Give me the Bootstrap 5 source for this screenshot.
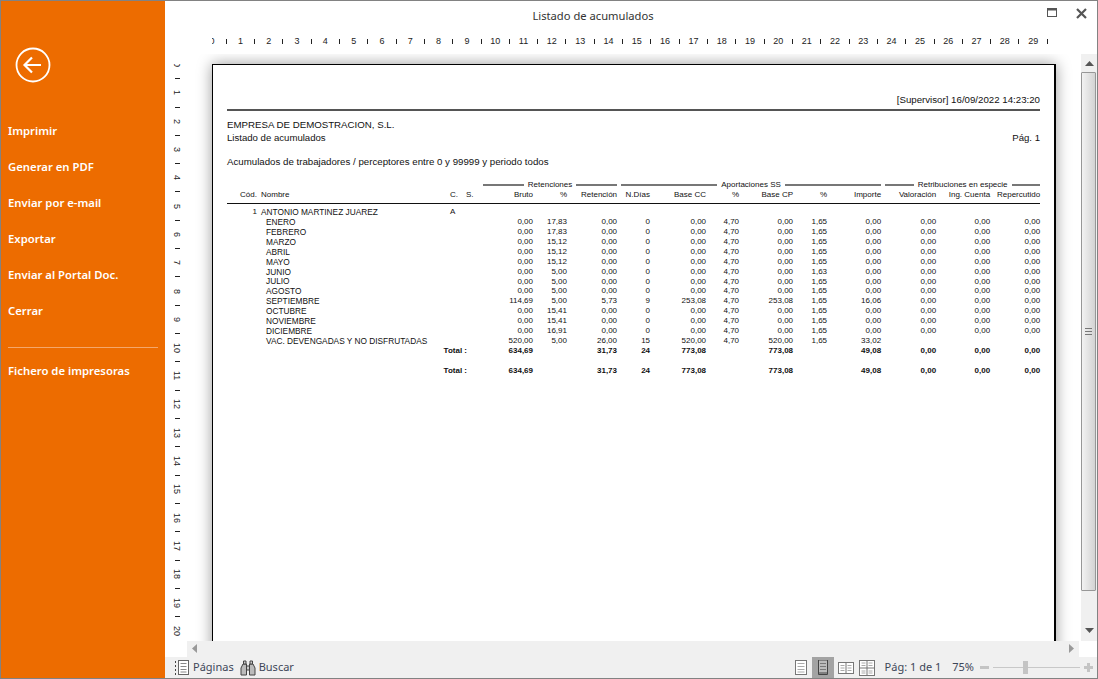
<!DOCTYPE html>
<html lang="es">
<head>
<meta charset="UTF-8" />
<title>Listado de acumulados</title>
<link href="https://cdn.jsdelivr.net/npm/bootstrap@5.3.0/dist/css/bootstrap.min.css" rel="stylesheet" />
<style>
  html, body { height: 100%; margin: 0; background: #fff; overflow: hidden; }
  .app-win { width: 1098px; height: 679px; border: 1px solid #828282; font-family: "Noto Sans", sans-serif; }
  .side-menu { width: 164px; flex: none; background: #ed6c00; color: #fff; padding: 0 7px; }
  .back-btn { height: 34px; margin: 47px 0 40px 7px; }
  .side-item { height: 36px; line-height: 18px; font-size: 11.3px; font-weight: 600; color: #fff; text-decoration: none; display: block; }
  .side-sep { border-top: 1px solid #f5a76a; margin: 9px 0 14px; }
  .main-col { min-width: 0; }
  .win-title { height: 31px; flex: none; font-size: 11.2px; color: #333; position: relative; padding-right: 76px; }
  .win-btns { position: absolute; right: 10px; top: 7px; gap: 19px; }
  .ruler-top { height: 22px; flex: none; margin-left: 47px; font: 9px "Liberation Sans", sans-serif; color: #222; overflow: hidden; }
  .ruler-top span { flex: 0 0 14.16px; text-align: center; line-height: 18px; }
  .ruler-top span:first-child { margin-left: -7px; }
  .ruler-top .tick::after { content: ""; display: inline-block; width: 1px; height: 5px; background: #222; vertical-align: middle; }
  .doc-row { flex: 1 1 0; min-height: 0; }
  .ruler-left { width: 20px; flex: none; font: 9px "Liberation Sans", sans-serif; color: #222; margin-top: 10px; padding-left: 4px; overflow: hidden; }
  .ruler-left span { height: 14.16px; flex: none; display: flex; align-items: center; justify-content: center; writing-mode: vertical-rl; }
  .ruler-left span:first-child { margin-top: -6.5px; }
  .ruler-left .tick { writing-mode: horizontal-tb; }
  .ruler-left .tick::after { content: ""; width: 5px; height: 1px; background: #222; }
  .view-area { padding: 10px 0 0 27px; overflow: hidden; min-width: 0; }
  .sheet { width: 844px; height: 800px; flex: none; border: 1px solid #000; border-right-width: 2px; padding: 29px 14px 0 14px; background: #fff;
    box-shadow: 0 0 14px rgba(0,0,0,.4); font: 8px/10px "Liberation Sans", sans-serif; color: #111; }
  .sheet-stamp { font-size: 9.7px; text-align: right; height: 15px; line-height: 12px; }
  .sheet-rule { height: 2px; background: #555; margin: 0 0 7px; }
  .sheet-h { font-size: 9.7px; line-height: 13px; }
  .sheet-h2 { font-size: 9.6px; line-height: 13px; }
  .sheet-sub { font-size: 9.7px; line-height: 13px; margin: 11px 0 12px; }
  .rep-tbl { table-layout: fixed; width: 813px; }
  .rep-tbl td, .rep-tbl th { padding: 0; height: 10px; line-height: 10px; white-space: nowrap; text-align: right; font-weight: 400; }
  .rep-tbl .l { text-align: left; }
  .rep-tbl .nm { text-align: left; padding-left: 4px; }
  .rep-tbl td.nm, .rep-tbl .mo { font-size: 8.3px; }
  .rep-tbl .mo { text-align: left; padding-left: 9px; }
  .rep-tbl thead tr:last-child th { height: 13px; border-bottom: 1px solid #111; vertical-align: top; }
  .rep-tbl .gap td { height: 4px; line-height: 4px; }
  .rep-tbl .tot td { font-weight: 700; }
  .rep-tbl .short-row td { height: 9px; line-height: 9px; }
  .grp-line { gap: 2px; align-items: center; padding-left: 4px; }
  .grp-line i { flex: 1 1 0; height: 2px; background: #777; }
  .grp-line b { font-weight: 400; padding: 0 2px; }
  .vbar { width: 16px; flex: none; background: #f0f0f0; }
  .vbar-btn { height: 18px; flex: none; }
  .vbar-thumb { height: 519px; flex: none; width: 15px; border: 1px solid #979797; border-radius: 1px; background: linear-gradient(90deg, #f2f2f2, #d3d3d3); }
  .vbar-btn.dn { margin-bottom: 2px; }
  .hbar { height: 16px; flex: none; margin: 0 18px 0 22px; background: #f0f0f0; padding: 0 5px 2px; }
  .st-bar { height: 21px; flex: none; background: #f0f0f0; font-size: 11px; color: #3d4658; padding-left: 10px; }
  .st-on { background: #a3a3a3; }
  .st-view { width: 22px; height: 21px; }
  .st-view.nrw { width: 20px; }
  .zoom-track { width: 87px; height: 1px; background: #c8c8c8; }
  .zoom-thumb { width: 5px; height: 13px; background: #c4c4c4; position: absolute; left: 30px; top: -6px; }
</style>
</head>
<body>
<div class="app-win d-flex">
  <aside class="side-menu">
    <div class="back-btn">
      <svg width="36" height="36" viewBox="0 0 36 36" style="margin-top:-1px"><circle cx="18" cy="18" r="16.5" fill="none" stroke="#fff" stroke-width="1.8"/><path d="M9.5 18H26M17 10.5L9.5 18l7.5 7.5" fill="none" stroke="#fff" stroke-width="2.2"/></svg>
    </div>
    <a class="side-item" href="#">Imprimir</a>
    <a class="side-item" href="#">Generar en PDF</a>
    <a class="side-item" href="#">Enviar por e-mail</a>
    <a class="side-item" href="#">Exportar</a>
    <a class="side-item" href="#">Enviar al Portal Doc.</a>
    <a class="side-item" href="#">Cerrar</a>
    <div class="side-sep"></div>
    <a class="side-item" href="#">Fichero de impresoras</a>
  </aside>

  <main class="main-col flex-grow-1 d-flex flex-column">
    <div class="win-title d-flex align-items-center justify-content-center">
      Listado de acumulados
      <div class="win-btns d-flex">
        <svg width="10" height="10" viewBox="0 0 10 10"><rect x=".5" y=".5" width="9" height="8" fill="none" stroke="#555"/><rect x="0" y="0" width="10" height="2.5" fill="#555"/></svg>
        <svg width="11" height="11" viewBox="0 0 11 11"><path d="M1 1l9 9M10 1l-9 9" stroke="#555" stroke-width="2.2"/></svg>
      </div>
    </div>

    <div class="ruler-top d-flex">
      <span>0</span><span class="tick"></span><span>1</span><span class="tick"></span><span>2</span><span class="tick"></span><span>3</span><span class="tick"></span><span>4</span><span class="tick"></span><span>5</span><span class="tick"></span><span>6</span><span class="tick"></span><span>7</span><span class="tick"></span><span>8</span><span class="tick"></span><span>9</span><span class="tick"></span><span>10</span><span class="tick"></span><span>11</span><span class="tick"></span><span>12</span><span class="tick"></span><span>13</span><span class="tick"></span><span>14</span><span class="tick"></span><span>15</span><span class="tick"></span><span>16</span><span class="tick"></span><span>17</span><span class="tick"></span><span>18</span><span class="tick"></span><span>19</span><span class="tick"></span><span>20</span><span class="tick"></span><span>21</span><span class="tick"></span><span>22</span><span class="tick"></span><span>23</span><span class="tick"></span><span>24</span><span class="tick"></span><span>25</span><span class="tick"></span><span>26</span><span class="tick"></span><span>27</span><span class="tick"></span><span>28</span><span class="tick"></span><span>29</span><span class="tick"></span>
    </div>

    <div class="doc-row d-flex">
      <div class="ruler-left d-flex flex-column">
        <span>0</span><span class="tick"></span><span>1</span><span class="tick"></span><span>2</span><span class="tick"></span><span>3</span><span class="tick"></span><span>4</span><span class="tick"></span><span>5</span><span class="tick"></span><span>6</span><span class="tick"></span><span>7</span><span class="tick"></span><span>8</span><span class="tick"></span><span>9</span><span class="tick"></span><span>10</span><span class="tick"></span><span>11</span><span class="tick"></span><span>12</span><span class="tick"></span><span>13</span><span class="tick"></span><span>14</span><span class="tick"></span><span>15</span><span class="tick"></span><span>16</span><span class="tick"></span><span>17</span><span class="tick"></span><span>18</span><span class="tick"></span><span>19</span><span class="tick"></span><span>20</span>
      </div>
      <div class="view-area flex-grow-1 d-flex">
        <div class="sheet">
          <div class="sheet-stamp">[Supervisor] 16/09/2022 14:23:20</div>
          <div class="sheet-rule"></div>
          <div class="sheet-h">EMPRESA DE DEMOSTRACION, S.L.</div>
          <div class="sheet-h2 d-flex justify-content-between"><span>Listado de acumulados</span><span>Pág. 1</span></div>
          <div class="sheet-sub">Acumulados de trabajadores / perceptores entre 0 y 99999 y periodo todos</div>
          <table class="rep-tbl">
            <colgroup>
              <col style="width:30px"><col style="width:193px"><col style="width:16px"><col style="width:17px"><col style="width:50px"><col style="width:34px"><col style="width:50px"><col style="width:33px"><col style="width:56px"><col style="width:33px"><col style="width:54px"><col style="width:34px"><col style="width:54px"><col style="width:55px"><col style="width:54px"><col style="width:50px">
            </colgroup>
            <thead>
              <tr>
                <th colspan="4"></th>
                <th colspan="3"><div class="grp-line d-flex" style="padding-left:0"><i></i><b>Retenciones</b><i></i></div></th>
                <th colspan="6"><div class="grp-line d-flex"><i></i><b>Aportaciones SS</b><i></i></div></th>
                <th colspan="3"><div class="grp-line d-flex"><i></i><b>Retribuciones en especie</b><i></i></div></th>
              </tr>
              <tr>
                <th>Cód.</th><th class="nm">Nombre</th><th class="l">C.</th><th class="l">S.</th><th>Bruto</th><th>%</th><th>Retención</th><th>N.Días</th><th>Base CC</th><th>%</th><th>Base CP</th><th>%</th><th>Importe</th><th>Valoración</th><th>Ing. Cuenta</th><th>Repercutido</th>
              </tr>
            </thead>
            <tbody>
              <tr class="gap"><td colspan="16"></td></tr>
              <tr><td>1</td><td class="nm">ANTONIO MARTINEZ JUAREZ</td><td class="l">A</td><td colspan="13"></td></tr>
              <tr><td></td><td class="mo" colspan="3">ENERO</td><td>0,00</td><td>17,83</td><td>0,00</td><td>0</td><td>0,00</td><td>4,70</td><td>0,00</td><td>1,65</td><td>0,00</td><td>0,00</td><td>0,00</td><td>0,00</td></tr>
              <tr><td></td><td class="mo" colspan="3">FEBRERO</td><td>0,00</td><td>17,83</td><td>0,00</td><td>0</td><td>0,00</td><td>4,70</td><td>0,00</td><td>1,65</td><td>0,00</td><td>0,00</td><td>0,00</td><td>0,00</td></tr>
              <tr><td></td><td class="mo" colspan="3">MARZO</td><td>0,00</td><td>15,12</td><td>0,00</td><td>0</td><td>0,00</td><td>4,70</td><td>0,00</td><td>1,65</td><td>0,00</td><td>0,00</td><td>0,00</td><td>0,00</td></tr>
              <tr><td></td><td class="mo" colspan="3">ABRIL</td><td>0,00</td><td>15,12</td><td>0,00</td><td>0</td><td>0,00</td><td>4,70</td><td>0,00</td><td>1,65</td><td>0,00</td><td>0,00</td><td>0,00</td><td>0,00</td></tr>
              <tr><td></td><td class="mo" colspan="3">MAYO</td><td>0,00</td><td>15,12</td><td>0,00</td><td>0</td><td>0,00</td><td>4,70</td><td>0,00</td><td>1,65</td><td>0,00</td><td>0,00</td><td>0,00</td><td>0,00</td></tr>
              <tr><td></td><td class="mo" colspan="3">JUNIO</td><td>0,00</td><td>5,00</td><td>0,00</td><td>0</td><td>0,00</td><td>4,70</td><td>0,00</td><td>1,63</td><td>0,00</td><td>0,00</td><td>0,00</td><td>0,00</td></tr>
              <tr class="short-row"><td></td><td class="mo" colspan="3">JULIO</td><td>0,00</td><td>5,00</td><td>0,00</td><td>0</td><td>0,00</td><td>4,70</td><td>0,00</td><td>1,65</td><td>0,00</td><td>0,00</td><td>0,00</td><td>0,00</td></tr>
              <tr><td></td><td class="mo" colspan="3">AGOSTO</td><td>0,00</td><td>5,00</td><td>0,00</td><td>0</td><td>0,00</td><td>4,70</td><td>0,00</td><td>1,65</td><td>0,00</td><td>0,00</td><td>0,00</td><td>0,00</td></tr>
              <tr><td></td><td class="mo" colspan="3">SEPTIEMBRE</td><td>114,69</td><td>5,00</td><td>5,73</td><td>9</td><td>253,08</td><td>4,70</td><td>253,08</td><td>1,65</td><td>16,06</td><td>0,00</td><td>0,00</td><td>0,00</td></tr>
              <tr><td></td><td class="mo" colspan="3">OCTUBRE</td><td>0,00</td><td>15,41</td><td>0,00</td><td>0</td><td>0,00</td><td>4,70</td><td>0,00</td><td>1,65</td><td>0,00</td><td>0,00</td><td>0,00</td><td>0,00</td></tr>
              <tr><td></td><td class="mo" colspan="3">NOVIEMBRE</td><td>0,00</td><td>15,41</td><td>0,00</td><td>0</td><td>0,00</td><td>4,70</td><td>0,00</td><td>1,65</td><td>0,00</td><td>0,00</td><td>0,00</td><td>0,00</td></tr>
              <tr><td></td><td class="mo" colspan="3">DICIEMBRE</td><td>0,00</td><td>16,91</td><td>0,00</td><td>0</td><td>0,00</td><td>4,70</td><td>0,00</td><td>1,65</td><td>0,00</td><td>0,00</td><td>0,00</td><td>0,00</td></tr>
              <tr><td></td><td class="mo" colspan="3">VAC. DEVENGADAS Y NO DISFRUTADAS</td><td>520,00</td><td>5,00</td><td>26,00</td><td>15</td><td>520,00</td><td>4,70</td><td>520,00</td><td>1,65</td><td>33,02</td><td></td><td></td><td></td></tr>
              <tr class="tot"><td></td><td colspan="3" style="padding-right:16px">Total :</td><td>634,69</td><td></td><td>31,73</td><td>24</td><td>773,08</td><td></td><td>773,08</td><td></td><td>49,08</td><td>0,00</td><td>0,00</td><td>0,00</td></tr>
              <tr><td colspan="16"></td></tr>
              <tr class="tot"><td></td><td colspan="3" style="padding-right:16px">Total :</td><td>634,69</td><td></td><td>31,73</td><td>24</td><td>773,08</td><td></td><td>773,08</td><td></td><td>49,08</td><td>0,00</td><td>0,00</td><td>0,00</td></tr>
            </tbody>
          </table>
        </div>
      </div>
      <div class="vbar d-flex flex-column">
        <div class="vbar-btn d-flex align-items-center justify-content-center"><svg width="9" height="5"><path d="M4.5 0L9 5H0z" fill="#555"/></svg></div>
        <div class="vbar-thumb d-flex align-items-center justify-content-center"><svg width="7" height="7"><path d="M0 .5h7M0 3.5h7M0 6.5h7" stroke="#777"/></svg></div>
        <div class="flex-grow-1"></div>
        <div class="vbar-btn dn d-flex align-items-center justify-content-center"><svg width="9" height="5"><path d="M0 0h9L4.5 5z" fill="#555"/></svg></div>
      </div>
    </div>

    <div class="hbar d-flex align-items-center justify-content-between">
      <svg width="5" height="9"><path d="M5 0v9L0 4.500z" fill="#999"/></svg>
      <svg width="5" height="9"><path d="M0 0v9l5-4.500z" fill="#999"/></svg>
    </div>

    <div class="st-bar d-flex align-items-center">
      <svg width="14" height="15" viewBox="0 0 14 15" style="margin-right:4px"><path d="M.5 1v2M.5 5v2M.5 9v2M.5 13v2" stroke="#444"/><rect x="3.500" y=".5" width="10" height="14" fill="#fff" stroke="#666"/><path d="M5.500 3.500h6M5.500 6.500h6M5.500 9.500h6M5.500 12h6" stroke="#888"/></svg>
      <span>Páginas</span>
      <svg width="16" height="16" viewBox="0 0 16 16" style="margin:0 3px 0 6px"><path d="M1 8l2-4h3.500v11H1zM15 8l-2-4H9.500v11H15z" fill="#bbb" stroke="#444"/><path d="M6.500 6h3v4h-3zM3.500 1h2.500v3H3.500zM10 1h2.500v3H10z" fill="#ccc" stroke="#444"/></svg>
      <span>Buscar</span>
      <div class="flex-grow-1"></div>
      <div class="st-view d-flex align-items-center justify-content-center"><svg width="12" height="15"><rect x=".5" y=".5" width="11" height="14" fill="#fff" stroke="#777"/><path d="M2.500 3.500h7M2.500 6.500h7M2.500 9.500h7M2.500 12h7" stroke="#aaa"/></svg></div>
      <div class="st-view st-on d-flex align-items-center justify-content-center"><svg width="10" height="16"><path d="M.5 0v14.500h9V0z" fill="#bbb" stroke="#444"/><path d="M2 3.500h6M2 6.500h6M2 9.500h6" stroke="#777"/><path d="M0 13h10" stroke="#444"/></svg></div>
      <div class="st-view nrw d-flex align-items-center justify-content-center" style="margin-left:2px"><svg width="16" height="12"><rect x=".5" y=".5" width="15" height="11" fill="#fff" stroke="#777"/><path d="M8 0v12" stroke="#777"/><path d="M2.500 3.500h4M2.500 6h4M2.500 8.500h4M9.500 3.500h4M9.500 6h4M9.500 8.500h4" stroke="#aaa"/></svg></div>
      <div class="st-view d-flex align-items-center justify-content-center"><svg width="16" height="16"><rect x=".5" y=".5" width="15" height="15" fill="#fff" stroke="#777"/><path d="M8 0v16M0 8h16" stroke="#777"/><path d="M2.500 3h4M2.500 5.500h4M9.500 3h4M9.500 5.500h4M2.500 11h4M2.500 13h4M9.500 11h4M9.500 13h4" stroke="#aaa"/></svg></div>
      <span style="margin-left:7px">Pág: 1 de 1</span>
      <span style="margin-left:11px">75%</span>
      <svg width="9" height="3" style="margin-left:6px"><rect width="9" height="3" fill="#c4c4c4"/></svg>
      <div class="zoom-track position-relative" style="margin:0 4px"><div class="zoom-thumb"></div></div>
      <svg width="9" height="9" style="margin-right:4px"><path d="M3 0h3v3h3v3H6v3H3V6H0V3h3z" fill="#c4c4c4"/></svg>
    </div>
  </main>
</div>
<script src="https://cdn.jsdelivr.net/npm/bootstrap@5.3.0/dist/js/bootstrap.bundle.min.js"></script>
</body>
</html>
